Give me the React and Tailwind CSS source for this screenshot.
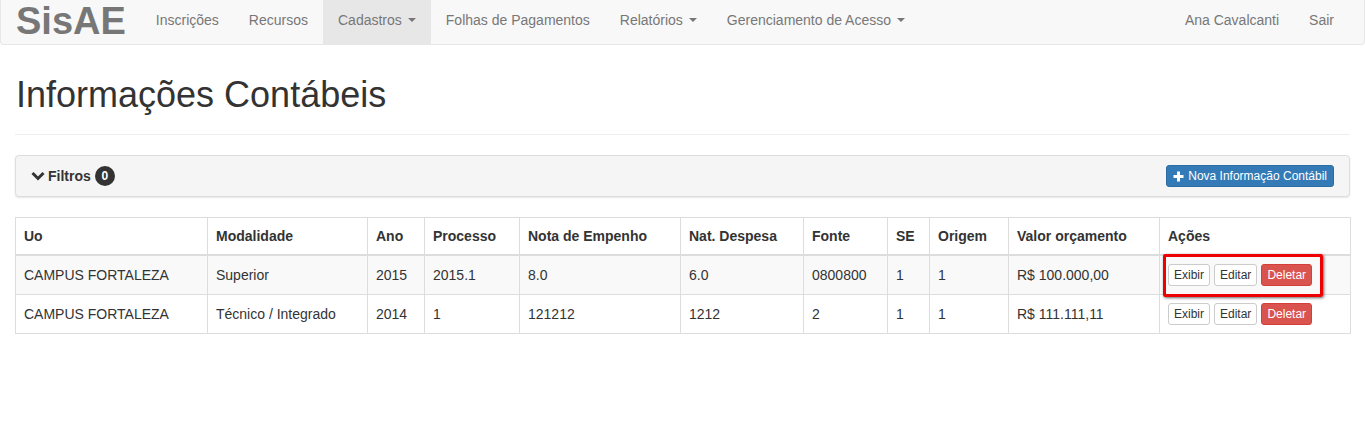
const font = { fontFamily: '"Liberation Sans", Arial, Helvetica, sans-serif' };

function Caret() {
  return (
    <span className="ml-[6px] inline-block h-0 w-0 border-x-[4px] border-t-[4px] border-x-transparent border-t-current align-middle" />
  );
}

const navLinks = [
  { label: 'Inscrições' },
  { label: 'Recursos' },
  { label: 'Cadastros', caret: true, active: true },
  { label: 'Folhas de Pagamentos' },
  { label: 'Relatórios', caret: true },
  { label: 'Gerenciamento de Acesso', caret: true },
];

const columns = [
  ['Uo', 'w-[192px]'],
  ['Modalidade', 'w-[160px]'],
  ['Ano', 'w-[57px]'],
  ['Processo', 'w-[95px]'],
  ['Nota de Empenho', 'w-[161px]'],
  ['Nat. Despesa', 'w-[123px]'],
  ['Fonte', 'w-[84px]'],
  ['SE', 'w-[42px]'],
  ['Origem', 'w-[79px]'],
  ['Valor orçamento', 'w-[151px]'],
  ['Ações', 'w-[191px]'],
];

const rows = [
  ['CAMPUS FORTALEZA', 'Superior', '2015', '2015.1', '8.0', '6.0', '0800800', '1', '1', 'R$ 100.000,00'],
  ['CAMPUS FORTALEZA', 'Técnico / Integrado', '2014', '1', '121212', '1212', '2', '1', '1', 'R$ 111.111,11'],
];

function Actions() {
  return (
    <div className="flex gap-[4px]">
      <button className="h-[22px] rounded-[3px] border border-[#ccc] bg-white px-[5px] text-[12px] leading-[20px] text-[#333]">Exibir</button>
      <button className="h-[22px] rounded-[3px] border border-[#ccc] bg-white px-[5px] text-[12px] leading-[20px] text-[#333]">Editar</button>
      <button className="h-[22px] rounded-[3px] border border-[#d43f3a] bg-[#d9534f] px-[5px] text-[12px] leading-[20px] text-white">Deletar</button>
    </div>
  );
}

export default function App() {
  return (
    <div className="min-h-[421px] bg-white text-[14px] leading-[20px] text-[#333]" style={font}>
      <nav className="flex h-[45px] items-stretch rounded-b-[4px] border-x border-b border-[#e7e7e7] bg-[#f8f8f8]">
        <span className="pl-[15px] pr-[15px] pt-[1px] text-[38px] font-bold leading-[40px] text-[#777]">SisAE</span>
        {navLinks.map((l) => (
          <a
            key={l.label}
            href="#"
            className={`flex items-start px-[15px] pt-[10px] text-[#777] ${l.active ? 'bg-[#e7e7e7] text-[#555]' : ''}`}
          >
            {l.label}
            {l.caret && <span className="mt-[8px] flex"><Caret /></span>}
          </a>
        ))}
        <div className="ml-auto flex pr-[15px]">
          <a href="#" className="px-[15px] pt-[10px] text-[#777]">Ana Cavalcanti</a>
          <a href="#" className="px-[15px] pt-[10px] text-[#777]">Sair</a>
        </div>
      </nav>

      <div className="px-[15px]">
        <div className="mt-[30px] border-b border-[#eee] pb-[19px] pl-[1px]">
          <h1 className="text-[36px] leading-[40px] font-normal text-[#333]">Informações Contábeis</h1>
        </div>

        <div className="mt-[20px] flex h-[42px] items-center justify-between rounded-[4px] border border-[#ddd] bg-[#f5f5f5] px-[15px] shadow-[0_1px_2px_rgba(0,0,0,0.1)]">
          <div className="flex items-center font-bold text-[#333]">
            <svg width="14" height="12" viewBox="0 0 14 12" className="mr-[3px]">
              <path d="M1.5 3 L7 8.5 L12.5 3" fill="none" stroke="#333" strokeWidth="3" />
            </svg>
            Filtros
            <span className="ml-[4px] flex h-[20px] w-[20px] items-center justify-center rounded-full bg-[#333] text-[12px] font-bold leading-none text-white">0</span>
          </div>
          <button className="flex h-[22px] items-center rounded-[3px] border border-[#2e6da4] bg-[#337ab7] px-[6px] text-[12px] text-white">
            <svg width="11" height="11" viewBox="0 0 11 11" className="mr-[4px]">
              <path d="M5.5 0.5 V10.5 M0.5 5.5 H10.5" stroke="white" strokeWidth="3" />
            </svg>
            Nova Informação Contábil
          </button>
        </div>

        <table className="mt-[20px] w-[1335px] table-fixed border-collapse border border-[#ddd]">
          <thead>
            <tr>
              {columns.map(([c, w]) => (
                <th key={c} className={`${w} border border-b-2 border-[#ddd] p-[8px] text-left font-bold`}>{c}</th>
              ))}
            </tr>
          </thead>
          <tbody>
            {rows.map((r, i) => (
              <tr key={i} className={i === 0 ? 'bg-[#f9f9f9]' : ''}>
                {r.map((v, j) => (
                  <td key={j} className="h-[39px] border border-[#ddd] px-[8px] py-[8px]">{v}</td>
                ))}
                <td className="relative border border-[#ddd] px-[8px] py-[8px]">
                  <Actions />
                  {i === 0 && (
                    <span className="pointer-events-none absolute left-[3px] top-[-2px] h-[43px] w-[160px] rounded-[2px] border-[3px] border-[#e00] shadow-[1px_1px_3px_rgba(0,0,0,0.6)]" />
                  )}
                </td>
              </tr>
            ))}
          </tbody>
        </table>
      </div>
    </div>
  );
}
